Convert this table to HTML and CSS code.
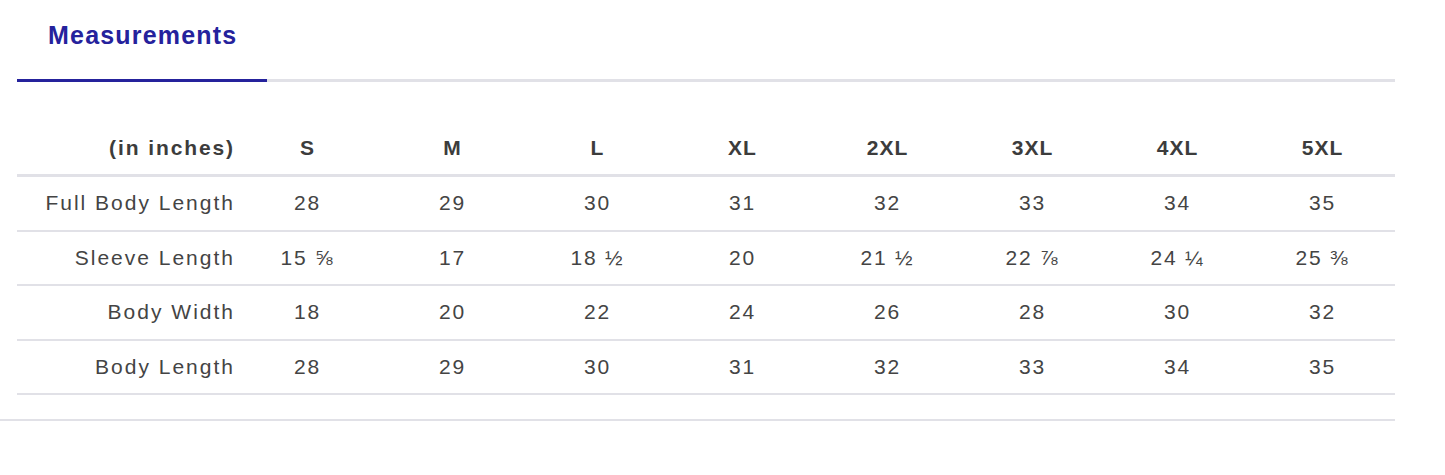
FILE: index.html
```html
<!DOCTYPE html>
<html lang="en">
<head>
<meta charset="utf-8">
<title>Measurements</title>
<link rel="stylesheet" href="styles.css">
</head>
<body>
<div class="page">
  <div class="tabs">
    <div class="tab active">Measurements</div>
  </div>
  <table class="sizes">
    <thead>
      <tr>
        <th class="label">(in inches)</th>
        <th>S</th><th>M</th><th>L</th><th>XL</th><th>2XL</th><th>3XL</th><th>4XL</th><th>5XL</th>
      </tr>
    </thead>
    <tbody>
      <tr>
        <td class="label">Full Body Length</td>
        <td>28</td><td>29</td><td>30</td><td>31</td><td>32</td><td>33</td><td>34</td><td>35</td>
      </tr>
      <tr>
        <td class="label">Sleeve Length</td>
        <td>15 ⅝</td><td>17</td><td>18 ½</td><td>20</td><td>21 ½</td><td>22 ⅞</td><td>24 ¼</td><td>25 ⅜</td>
      </tr>
      <tr>
        <td class="label">Body Width</td>
        <td>18</td><td>20</td><td>22</td><td>24</td><td>26</td><td>28</td><td>30</td><td>32</td>
      </tr>
      <tr>
        <td class="label">Body Length</td>
        <td>28</td><td>29</td><td>30</td><td>31</td><td>32</td><td>33</td><td>34</td><td>35</td>
      </tr>
    </tbody>
  </table>
  <div class="footer-rule"></div>
</div>
</body>
</html>
```

FILE: styles.css
```css
html, body {
  margin: 0;
  padding: 0;
  background: #ffffff;
}

body {
  font-family: "Liberation Sans", Arial, sans-serif;
  color: #444444;
}

.page {
  width: 1395px;
}

.tabs {
  margin-left: 17px;
  display: flex;
  border-bottom: 3px solid #e1e1e7;
}

.tab {
  width: 250px;
  box-sizing: border-box;
  padding: 21px 0 30px 31px;
  margin-bottom: -3px;
  font-size: 25px;
  line-height: 28px;
  font-weight: bold;
  letter-spacing: 1.2px;
  color: #25229c;
  border-bottom: 3px solid #25229c;
}

.sizes {
  margin: 39px 0 0 17px;
  width: 1378px;
  border-collapse: collapse;
  table-layout: fixed;
}

.sizes th,
.sizes td {
  padding: 0;
  text-align: center;
  font-size: 21px;
  letter-spacing: 1.8px;
}

.sizes th {
  height: 53px;
  font-weight: bold;
  color: #3c3c3c;
  border-bottom: 3px solid #e1e1e7;
  letter-spacing: 1px;
}

.sizes td {
  height: 52.6px;
  border-bottom: 2px solid #e1e1e7;
}

.sizes .label {
  width: 218px;
  text-align: right;
  letter-spacing: 2px;
}

.sizes th.label {
  letter-spacing: 1.9px;
}

.footer-rule {
  margin-top: 24px;
  height: 2px;
  background: #e1e1e7;
}
```
